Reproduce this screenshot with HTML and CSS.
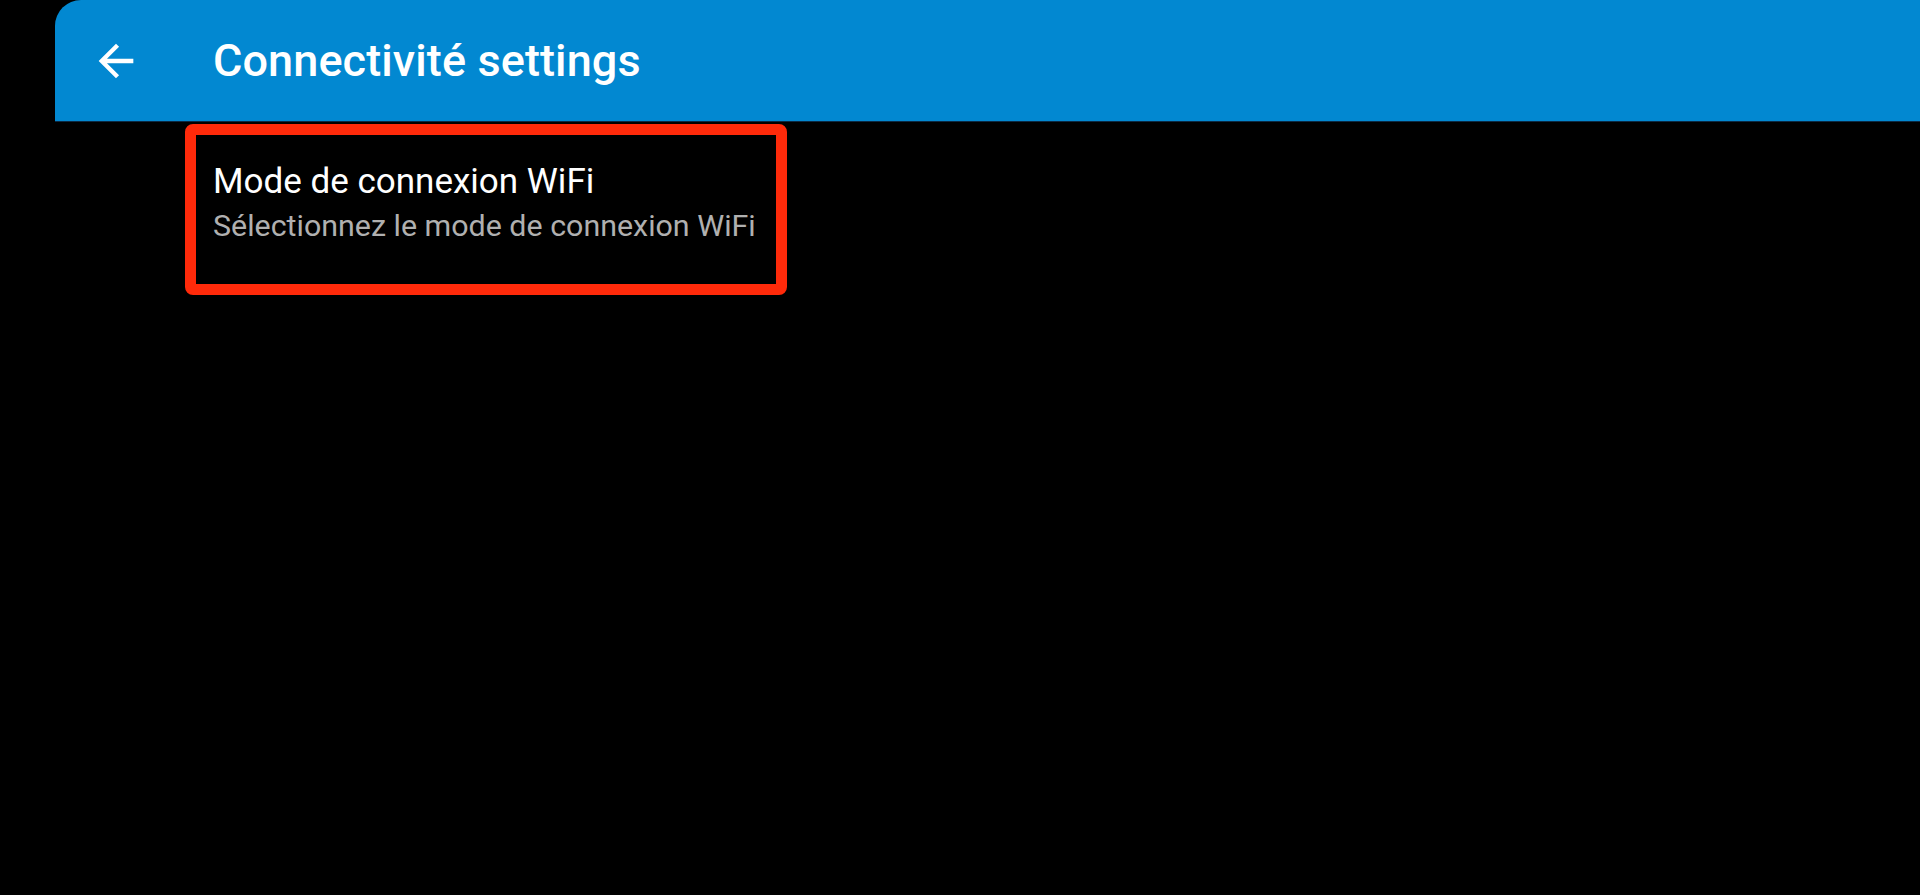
FILE: index.html
```html
<!DOCTYPE html>
<html lang="fr">
<head>
  <meta charset="UTF-8" />
  <title>Connectivité settings</title>
  <link rel="stylesheet" href="styles.css">
</head>
<body>

<div class="screen">
  <header class="toolbar">
    <button class="back" aria-label="Retour">
      <svg viewBox="0 0 24 24" width="52" height="52">
        <path d="M20 11H7.83l5.59-5.59L12 4l-8 8 8 8 1.41-1.41L7.83 13H20v-2z" fill="#fff"/>
      </svg>
    </button>
    <h1>Connectivité settings</h1>
  </header>

  <div class="prefs">
    <div class="pref focused">
      <div class="pref-title">Mode de connexion WiFi</div>
      <div class="pref-summary">Sélectionnez le mode de connexion WiFi</div>
    </div>
  </div>
</div>

</body>
</html>
```

FILE: styles.css
```css
:root {
  --primary: #0288d1;
  --focus: #ff2a0a;
  --summary: #b0b0b0;
}

body {
  margin: 0;
  background: #000;
  font-family: Roboto, 'Noto Sans', sans-serif;
  color: #fff;
  height: 895px;
  overflow: hidden;
}

.screen {
  padding-left: 55px;
}

.toolbar {
  display: flex;
  align-items: center;
  height: 121px;
  background: var(--primary);
  border-top-left-radius: 26px;
  box-shadow: 0 1px 0 #0b2a45;
}

.back {
  display: flex;
  align-items: center;
  justify-content: center;
  width: 80px;
  height: 80px;
  margin-left: 21px;
  padding: 0;
  background: none;
  border: none;
  cursor: pointer;
}

.toolbar h1 {
  margin: 0 0 0 57px;
  font-size: 45px;
  font-weight: 500;
  letter-spacing: 0.1px;
}

.prefs {
  padding: 3px 0 0 130px;
}

.pref {
  box-sizing: border-box;
  width: 602px;
  height: 171px;
  padding: 25px 17px 0 17px;
  border: 11px solid transparent;
  border-radius: 8px;
}

.pref.focused {
  border-color: var(--focus);
}

.pref-title {
  font-size: 35px;
  line-height: 44px;
  white-space: nowrap;
}

.pref-summary {
  margin-top: 2px;
  font-size: 30.4px;
  line-height: 40px;
  color: var(--summary);
  white-space: nowrap;
}
```
